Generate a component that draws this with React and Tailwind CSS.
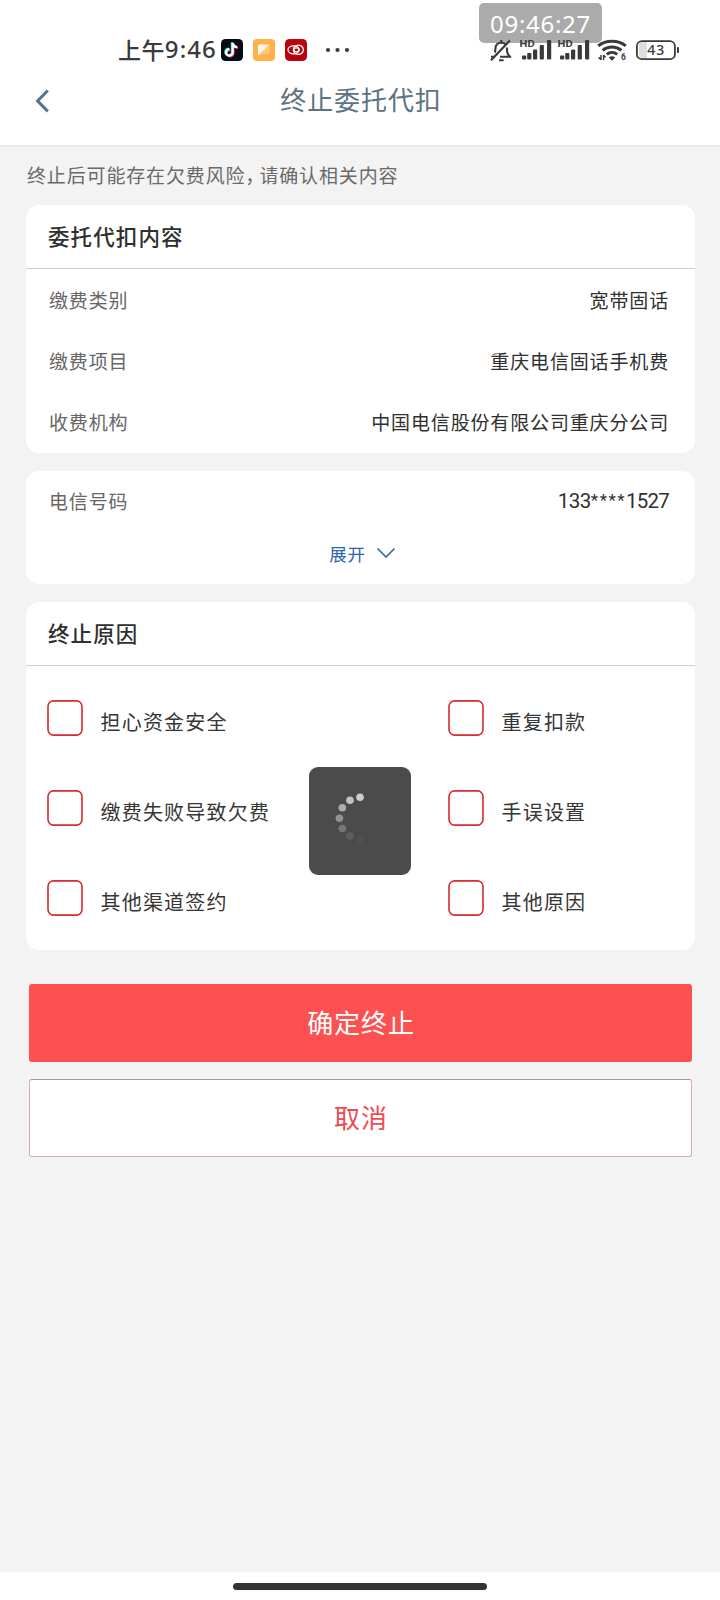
import React from 'react';

const DARK = '#3a3a3a';

function Signal() {
  return (
    <svg width="34" height="24" viewBox="0 0 34 24" className="shrink-0">
      <text x="-0.4" y="10" fontSize="9.6" fontWeight="700" fill={DARK} fontFamily="Roboto, sans-serif" textLength="15" lengthAdjust="spacingAndGlyphs">HD</text>
      {[[2, 18.4, 4], [7.2, 16, 6.4], [13, 12.5, 9.9], [19.7, 8, 14.4], [27, 3, 19.4]].map(([x, y, h], i) => (
        <rect key={i} x={x} y={y} width="4.2" height={h} rx="1" fill={DARK} />
      ))}
    </svg>
  );
}

function StatusBar() {
  return (
    <div className="relative h-[70px] shrink-0">
      <div className="absolute left-[479px] top-[3px] flex h-10 w-[123px] items-center justify-center rounded-[5px] bg-[#ababab] pt-[2px] text-[24px] text-white" style={{ fontFamily: '"Noto Sans", sans-serif' }}>
        <span className="tracking-[0.7px]">09:46:27</span>
      </div>
      <div className="relative flex h-full items-start pt-[37px] pl-[118px]">
        <div className="-mt-px flex h-[26px] w-[100px] items-center whitespace-nowrap text-[23px] font-medium tracking-[0.4px] text-[#3a3a3a]">
          上午<span className="text-[24px] tracking-[1.1px]" style={{ fontFamily: '"Noto Sans", sans-serif' }}>9:46</span>
        </div>
        <div className="flex gap-[10px] pt-[2px] pl-[3px]">
          <svg width="22" height="22" viewBox="0 0 22 22">
            <rect width="22" height="22" rx="4.5" fill="#070b16" />
            <g fill="none" strokeWidth="2.2">
              <path d="M11.7 3.8v9.6a3.3 3.3 0 1 1-3.3-3.3M11.7 4c.4 2.6 2 4 4.6 4.2" stroke="#29e5e1" transform="translate(-.8 -.5)" />
              <path d="M11.7 3.8v9.6a3.3 3.3 0 1 1-3.3-3.3M11.7 4c.4 2.6 2 4 4.6 4.2" stroke="#f52f5b" transform="translate(.8 .7)" />
              <path d="M11.7 3.8v9.6a3.3 3.3 0 1 1-3.3-3.3M11.7 4c.4 2.6 2 4 4.6 4.2" stroke="#fff" />
            </g>
          </svg>
          <svg width="22" height="22" viewBox="0 0 22 22">
            <defs>
              <linearGradient id="fade" x1="0" y1="0" x2="1" y2="0">
                <stop offset="0" stopColor="#fff" /><stop offset="1" stopColor="#ffe6c2" />
              </linearGradient>
            </defs>
            <rect width="22" height="22" rx="4" fill="#ffb14a" />
            <path d="M6 5.5h10.5v9.3H10l-5 1.7V6.5z" fill="#ffc77c" />
            <path d="M6 5.5h10.5L5 16.5v-10z" fill="url(#fade)" />
          </svg>
          <svg width="22" height="22" viewBox="0 0 22 22">
            <rect width="22" height="22" rx="4.5" fill="#b8040d" />
            <g fill="none" stroke="#fff" strokeWidth="1.3">
              <ellipse cx="8.6" cy="10.8" rx="5.6" ry="4" />
              <ellipse cx="13.4" cy="10.8" rx="5" ry="4.6" />
              <ellipse cx="11.4" cy="10.8" rx="2.5" ry="2" />
            </g>
          </svg>
        </div>
        <svg width="26" height="6" viewBox="0 0 26 6" className="mt-[10px] ml-[18px]">
          <circle cx="3" cy="3" r="2.1" fill={DARK} /><circle cx="12.5" cy="3" r="2.1" fill={DARK} /><circle cx="22" cy="3" r="2.1" fill={DARK} />
        </svg>
        <div className="ml-[138px] flex items-start">
          <svg width="24" height="26" viewBox="0 0 24 26" fill="none" stroke={DARK} strokeWidth="2.1" className="shrink-0">
            <path d="M11 19.8h11.2M5.8 15.5c.6-1.4.6-2.4.6-3.4 0-4.2 2.2-6.4 5.8-6.4 1.7 0 3.2.5 4.2 1.5M18 10.5v3.2c0 2.6 1.2 4.2 2.6 6" />
            <path d="M10 23.2h4.6M12.2 3v3M2 19.8h4" />
            <path d="M20.9 3.4 2 23.2" strokeWidth="2.2" />
          </svg>
          <div className="ml-[7px] flex gap-1"><Signal /><Signal /></div>
          <svg width="30" height="26" viewBox="0 0 30 26" className="ml-[5px] shrink-0">
            <g fill="none" stroke={DARK} strokeWidth="3">
              <path d="M1.2 8.9C8.8 2.6 21.2 2.6 28.8 8.9" />
              <path d="M5.6 13.4c5.4-4.4 13.4-4.4 18.8 0" />
              <path d="M9.8 17.4c3-2.4 7.4-2.4 10.4 0" />
            </g>
            <path d="M11.8 20.4c2-1.5 4.4-1.5 6.4 0L15 23.8z" fill={DARK} />
            <path d="M4 18v5M1.6 20.4l2.4 2.4M6.6 23v-5M8.6 20.2l-2-2" fill="none" stroke={DARK} strokeWidth="1.5" />
            <text x="24" y="23.2" fontSize="8.5" fontWeight="700" fill={DARK} fontFamily="Roboto, sans-serif">6</text>
          </svg>
          <svg width="45" height="24" viewBox="0 0 45 24" className="ml-[8px] shrink-0">
            <path d="M7 5h5v16H7a3 3 0 0 1-3-3V8a3 3 0 0 1 3-3z" fill="#dedede" />
            <rect x="1.9" y="4.2" width="38" height="18" rx="5" fill="none" stroke={DARK} strokeWidth="1.8" />
            <rect x="42" y="10" width="2" height="6" rx=".8" fill={DARK} />
            <text x="21.2" y="18.2" fontSize="14" textAnchor="middle" letterSpacing="0.9" fill={DARK} fontWeight="500" fontFamily='"Noto Sans", sans-serif'>43</text>
          </svg>
        </div>
      </div>
    </div>
  );
}

function Row({ label, children }) {
  return (
    <div className="flex h-[61.2px] shrink-0 items-center justify-between pr-[26px] pl-[23px] text-[19px] tracking-[0.85px]">
      <span className="text-[#666]">{label}</span>
      <span className="text-[#303030]">{children}</span>
    </div>
  );
}

function CardTitle({ children }) {
  return (
    <h2 className="flex h-[64px] items-center border-b-[1.5px] border-[#d0d0d0] pl-[22px] text-[21.5px] font-medium tracking-[1.1px] text-[#303030]">{children}</h2>
  );
}

function Option({ label }) {
  return (
    <label className="flex h-[36px] items-start gap-[17.5px]">
      <svg width="36" height="36" viewBox="0 0 36 36" className="shrink-0">
        <rect x="1" y="0.9" width="34" height="34.2" rx="5.5" fill="none" stroke="#d92a30" strokeWidth="1.6" />
      </svg>
      <span className="pt-[7px] text-[20px] leading-[30px] tracking-[1.2px] whitespace-nowrap text-[#363636]">{label}</span>
    </label>
  );
}

const reasons = ['担心资金安全', '重复扣款', '缴费失败导致欠费', '手误设置', '其他渠道签约', '其他原因'];
const dots = [
  [51, 30.2, '#cdcdcd'],
  [41, 33.2, '#c2c2c2'],
  [33.3, 40.8, '#adadad'],
  [30.4, 51.3, '#929292'],
  [33.3, 61.5, '#777777'],
  [41, 69.1, '#5e5e5e'],
  [51, 72.8, '#4f4f4f'],
];

export default function App() {
  return (
    <div className="relative flex h-[1600px] w-[720px] flex-col overflow-hidden bg-[#f3f3f3]" style={{ fontFamily: '"Noto Sans CJK SC", sans-serif' }}>
      <header className="flex h-[145px] shrink-0 flex-col bg-white shadow-[0_1px_2px_rgba(0,0,0,0.08)]">
        <StatusBar />
        <div className="grid h-[61px] grid-cols-[80px_1fr_80px] items-center">
          <svg width="16" height="24" viewBox="0 0 16 24" className="ml-[34px] fill-none stroke-[#5d7283]" strokeWidth="3">
            <path d="M13.8 1.5 3.6 11.9 13.8 22.4" />
          </svg>
          <h1 className="-mt-[4px] pl-[2px] text-center text-[26px] tracking-[0.9px] text-[#5d7283]">终止委托代扣</h1>
        </div>
      </header>
      <main className="flex flex-1 flex-col px-[26px]">
        <p className="flex h-[60px] items-center pl-px text-[19px] tracking-[0.85px] whitespace-nowrap text-[#6a6a6a]">
          <span>终止后可能存在欠费风险<span className="tracking-[-5px]">，</span>请确认相关内容</span>
        </p>
        <section className="h-[248px] w-[669px] rounded-[13px] bg-white">
          <CardTitle>委托代扣内容</CardTitle>
          <div className="pt-[0.5px]">
            <Row label="缴费类别">宽带固话</Row>
            <Row label="缴费项目">重庆电信固话手机费</Row>
            <Row label="收费机构">中国电信股份有限公司重庆分公司</Row>
          </div>
        </section>
        <section className="mt-[18px] h-[113px] w-[669px] rounded-[13px] bg-white">
          <Row label="电信号码">
            <span className="text-[20.5px] tracking-[-0.5px]" style={{ fontFamily: 'Roboto, sans-serif' }}>
              133<span className="align-[2px] text-[17px] leading-none tracking-[1.5px]">****</span><span className="tracking-[-0.8px]">1527</span>
            </span>
          </Row>
          <button className="flex h-[44px] w-full items-center justify-center gap-[10px] pl-[4px] text-[17.5px] tracking-[0.7px] text-[#2c64ae]">
            展开
            <svg width="20" height="12" viewBox="0 0 20 12" fill="none" stroke="#3a69ae" strokeWidth="1.7" className="-mt-[3px]">
              <path d="M1.5 1.5 10 10 18.5 1.5" />
            </svg>
          </button>
        </section>
        <section className="mt-[18px] h-[348px] w-[669px] rounded-[13px] bg-white">
          <CardTitle>终止原因</CardTitle>
          <div className="grid grid-cols-[401px_1fr] gap-y-[54px] pt-[34px] pl-[21px]">
            {reasons.map((r) => <Option key={r} label={r} />)}
          </div>
        </section>
        <div className="mt-[34px] flex flex-col gap-[17px] pr-[2px] pl-[3px] text-[26px] tracking-[0.9px]">
          <button className="h-[78px] rounded-[3px] bg-[#fd5050] pb-[4px] pl-px text-white">确定终止</button>
          <button className="h-[78px] rounded-[3px] border border-[#dda9a9] border-t-[#ad9494] bg-white pb-[4px] pl-px text-[#f04a52]">取消</button>
        </div>
      </main>
      <footer className="flex h-[28px] shrink-0 justify-center bg-white pt-[11px]">
        <div className="h-[6.5px] w-[254px] rounded-full bg-[#333]" />
      </footer>
      <div className="absolute top-[767px] left-[309.4px] h-[108px] w-[101.6px] rounded-[9px] bg-[#4b4b4b]">
        <svg width="101" height="108" viewBox="0 0 101 108">
          {dots.map(([x, y, c]) => <circle key={y} cx={x} cy={y} r="3.8" fill={c} />)}
        </svg>
      </div>
    </div>
  );
}
